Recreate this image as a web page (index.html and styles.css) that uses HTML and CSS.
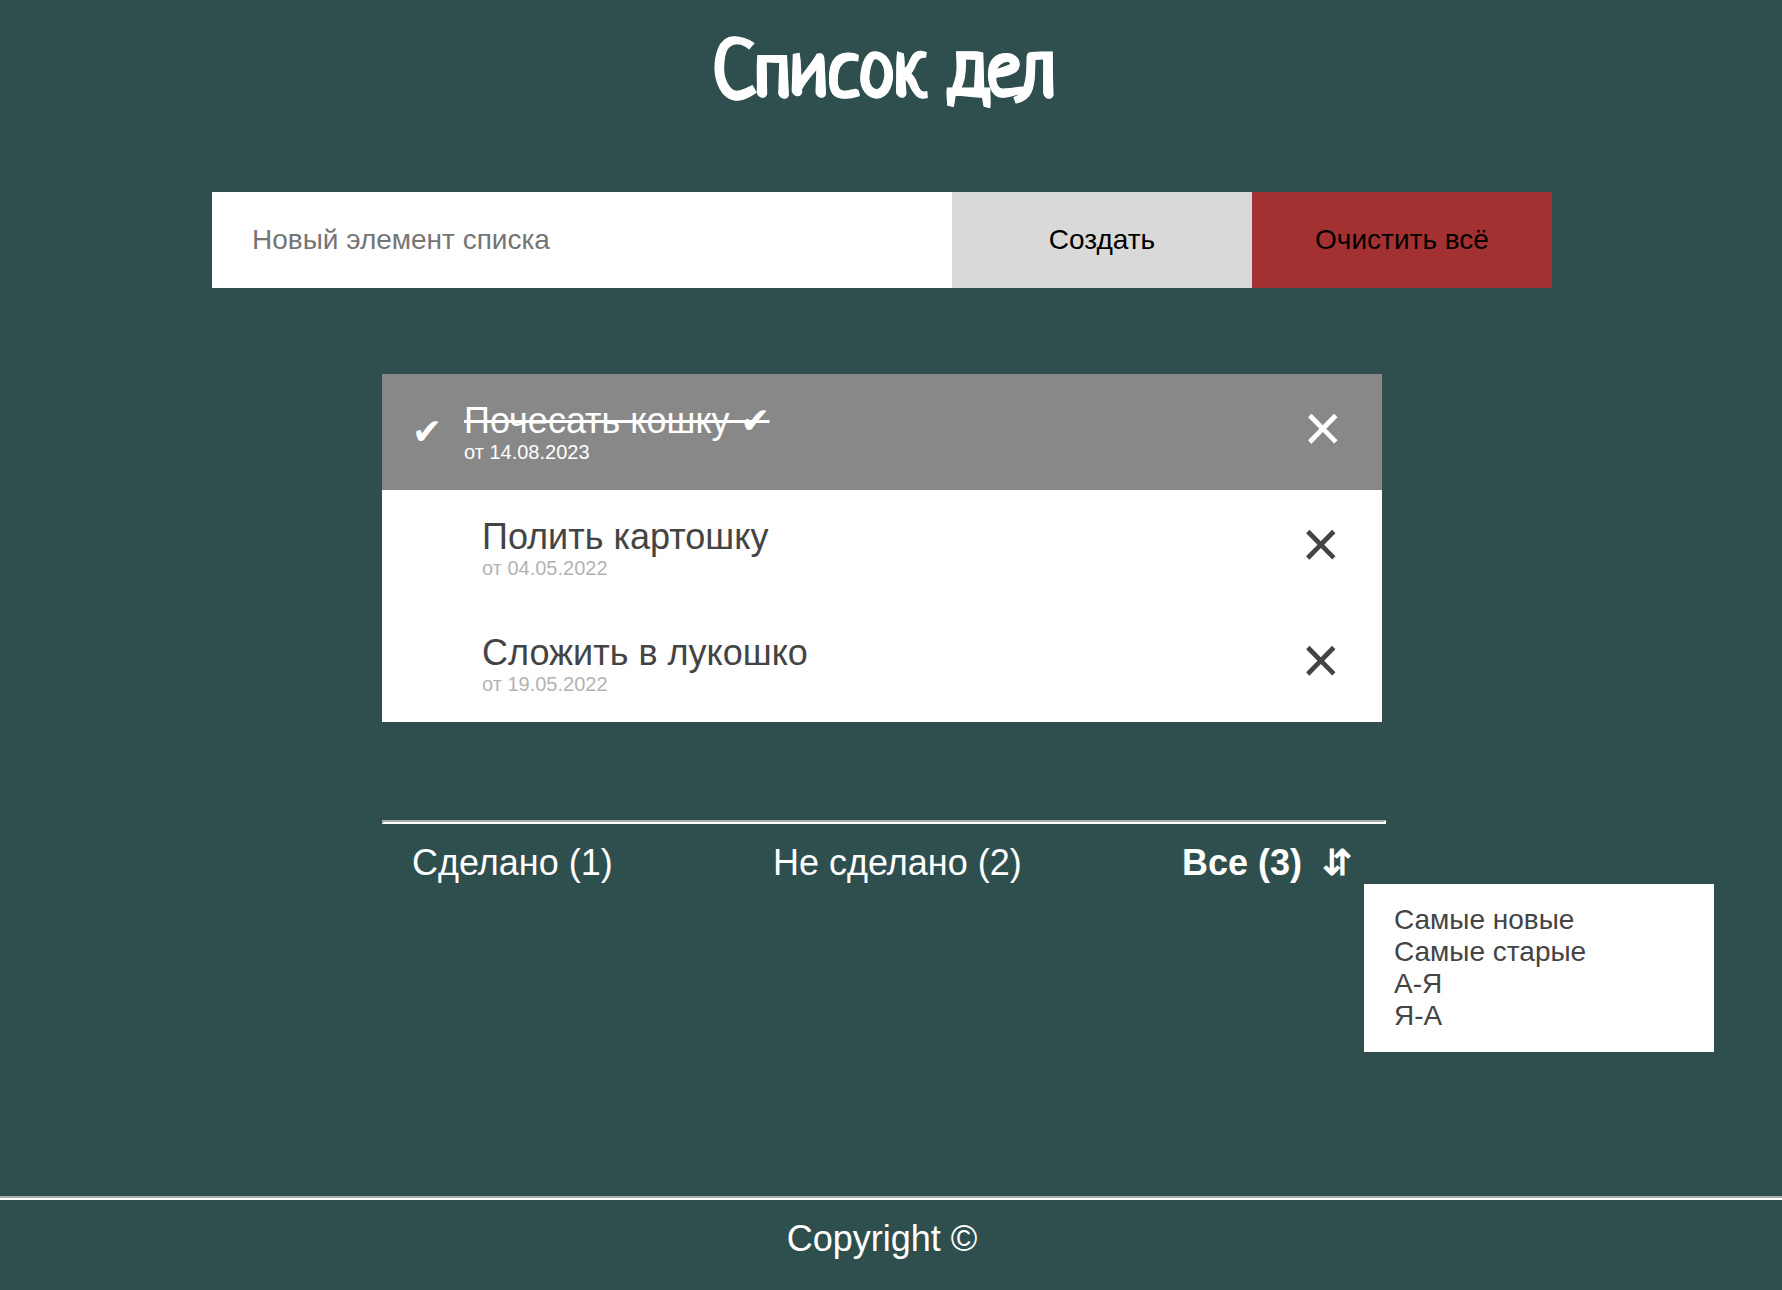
FILE: index.html
```html
<!DOCTYPE html>
<html lang="ru">
<head>
<meta charset="utf-8">
<title>Список дел</title>
<link rel="stylesheet" href="styles.css">
</head>
<body>
<header class="header"><h1 class="title">Список дел</h1></header>
<main class="main">
  <form class="form">
    <input class="form-input" type="text" placeholder="Новый элемент списка" aria-label="Новый элемент списка">
    <button class="form-button create" type="button">Создать</button>
    <button class="form-button clear" type="button">Очистить всё</button>
  </form>
  <ul class="list">
    <li class="item done">
      <span class="check">✔</span>
      <div class="text"><p class="name">Почесать кошку ✔</p><p class="date">от 14.08.2023</p></div>
      <button class="remove" type="button" aria-label="Удалить">×</button>
    </li>
    <li class="item">
      <div class="text"><p class="name">Полить картошку</p><p class="date">от 04.05.2022</p></div>
      <button class="remove" type="button" aria-label="Удалить">×</button>
    </li>
    <li class="item">
      <div class="text"><p class="name">Сложить в лукошко</p><p class="date">от 19.05.2022</p></div>
      <button class="remove" type="button" aria-label="Удалить">×</button>
    </li>
  </ul>
  <section class="summary">
    <hr class="rule">
    <div class="filters">
      <button class="filter" type="button">Сделано (1)</button>
      <button class="filter" type="button">Не сделано (2)</button>
      <div class="sorting">
        <button class="filter active" type="button">Все (3)</button>
        <button class="filter active" type="button" aria-label="Сортировка">⇵</button>
        <div class="menu">
          <button class="option" type="button">Самые новые</button>
          <button class="option" type="button">Самые старые</button>
          <button class="option" type="button">А-Я</button>
          <button class="option" type="button">Я-А</button>
        </div>
      </div>
    </div>
  </section>
</main>
<footer class="footer">
  <hr class="rule">
  <p class="copyright">Copyright ©</p>
</footer>
</body>
</html>
```
FILE: styles.css
```css
* { box-sizing: border-box; }
body {
  margin: 0;
  min-height: 100vh;
  display: flex;
  flex-direction: column;
  overflow-x: hidden;
  background: #2f4f4f;
  color: #fff;
  font: 36px/40px "Liberation Sans", Arial, sans-serif;
}
p, h1, ul { margin: 0; padding: 0; }
button { border: 0; padding: 0; background: none; color: inherit; font: inherit; cursor: pointer; }
.header { padding: 36px 14px 0 0; text-align: center; }
.title { font: 700 80px/80px "Neucha", cursive; -webkit-text-stroke: 1px #fff; }
.main { flex: 1; padding: 76px 18px 0 0; }
.form { display: flex; width: 76%; max-width: 1340px; height: 96px; margin: 0 auto; }
.form-input { flex: 1; min-width: 0; border: 0; padding: 0 40px; font: 28px "Liberation Sans", Arial, sans-serif; }
.form-input::placeholder { color: #757575; }
.form-button { width: 300px; font-size: 28px; color: #000; }
.create { background: #d9d9d9; }
.clear { background: #a33131; }
.list { width: 1000px; max-width: 100%; margin: 86px auto 0; list-style: none; background: #fff; color: #444; }
.item { display: flex; align-items: center; height: 116px; padding: 0 42px 0 100px; }
.done { background: #888; color: #fff; padding: 0 40px 0 30px; }
.check { width: 52px; }
.text { flex: 1; padding-bottom: 2px; }
.name { line-height: 42px; }
.done .name { text-decoration: line-through; }
.date { font-size: 20px; line-height: 20px; color: #b3b3b3; }
.done .date { color: #fff; }
.remove { padding-bottom: 8px; font-size: 66px; line-height: 60px; }
.summary { width: 1000px; max-width: 100%; margin: 98px auto 0; }
.rule { box-sizing: content-box; width: 100%; margin: 0; border: 2px inset #fff; }
.filters { display: flex; justify-content: space-between; padding: 19px 30px 20px; }
.filter { white-space: nowrap; }
.active { font-weight: 700; }
.sorting { position: relative; display: flex; gap: 20px; }
.menu { position: absolute; top: 41px; left: 100%; display: flex; flex-direction: column; align-items: flex-start; width: 350px; margin-left: 12px; padding: 20px 30px; background: #fff; color: #444; }
.option { font-size: 28px; line-height: 32px; }
.footer .rule { margin: 0 -2px; }
.copyright { padding: 19px 18px 31px 0; text-align: center; }
```
